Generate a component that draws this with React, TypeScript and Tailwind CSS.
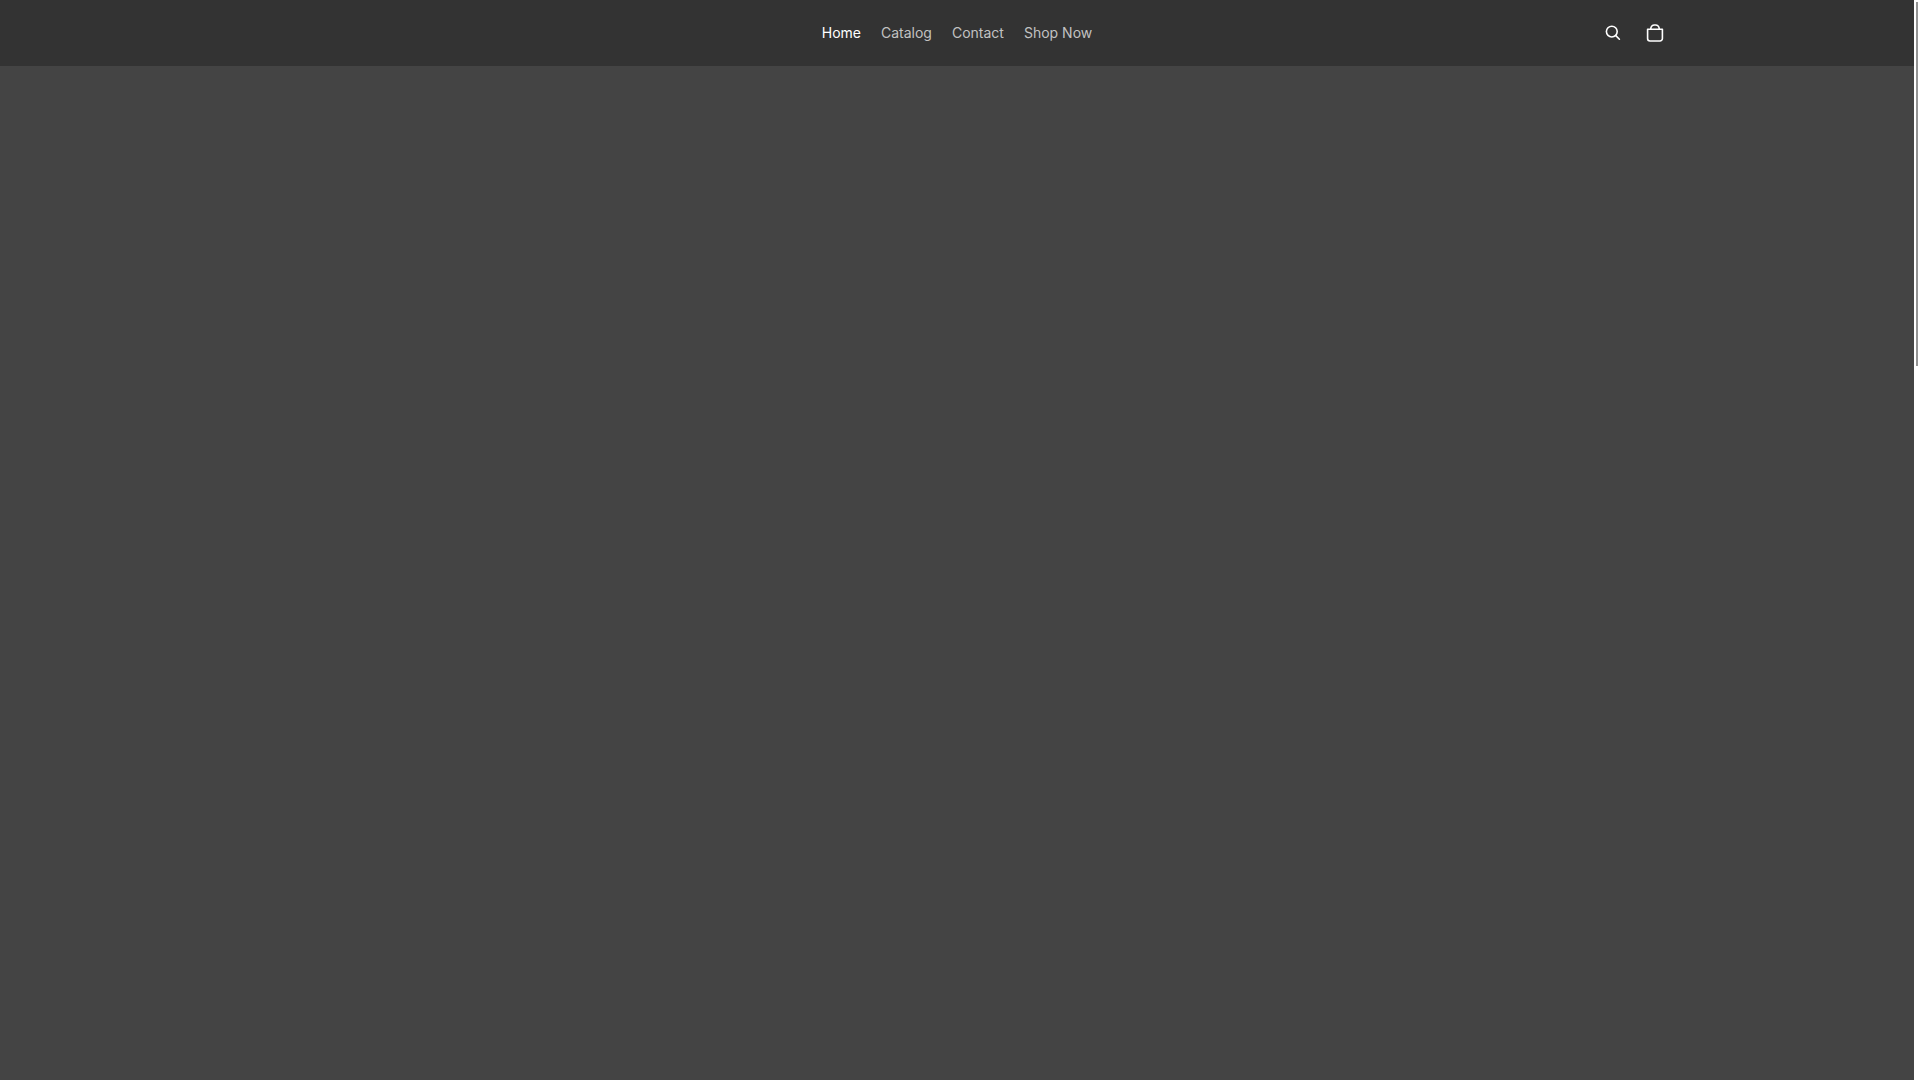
const links = [
  { label: "Home", href: "#home", active: true },
  { label: "Catalog", href: "#catalog", active: false },
  { label: "Contact", href: "#contact", active: false },
  { label: "Shop Now", href: "#shop", active: false },
];

function SearchIcon() {
  return (
    <svg className="h-5 w-5" viewBox="0 0 20 20" fill="none" stroke="currentColor" strokeWidth="1.6" aria-hidden="true">
      <circle cx="8.8" cy="8.6" r="5.4" />
      <path strokeLinecap="round" d="M12.8 12.6l3.6 3.6" />
    </svg>
  );
}

function BagIcon() {
  return (
    <svg className="h-5 w-5" viewBox="0 0 20 20" fill="none" stroke="currentColor" strokeWidth="1.6" aria-hidden="true">
      <path strokeLinejoin="round" d="M2.6 6.2h14.8v9.4a2.4 2.4 0 0 1-2.4 2.4H5a2.4 2.4 0 0 1-2.4-2.4z" />
      <path d="M5.8 6.2V5.6a3.6 3.6 0 0 1 3.6-3.6h1.2a3.6 3.6 0 0 1 3.6 3.6v.6" />
    </svg>
  );
}

function Header() {
  return (
    <header className="bg-[#333333]">
      <div className="mx-auto grid h-[66px] w-full max-w-[1440px] grid-cols-[1fr_auto_1fr] items-center">
        <nav aria-label="Main" className="col-start-2">
          <ul className="flex gap-5">
            {links.map((link) => (
              <li key={link.label}>
                <a
                  href={link.href}
                  className={`block text-sm ${link.active ? "text-white" : "text-[#c2c2c2] hover:text-white"}`}
                >
                  {link.label}
                </a>
              </li>
            ))}
          </ul>
        </nav>
        <div className="flex justify-end">
          <button type="button" aria-label="Search" className="flex h-11 w-10 items-center justify-center">
            <SearchIcon />
          </button>
          <button type="button" aria-label="Cart" className="flex h-11 w-11 items-center justify-center">
            <BagIcon />
          </button>
        </div>
      </div>
    </header>
  );
}

export default function App() {
  return (
    <div className="flex min-h-screen bg-[#444444] font-['Inter',sans-serif] text-white">
      <div className="min-w-0 flex-1">
        <Header />
        <main />
      </div>
      {/* scroll track */}
      <div className="w-1.5 shrink-0 bg-white px-0.5 pt-0.5">
        <div className="h-[364px] bg-[#949494]" />
      </div>
    </div>
  );
}
